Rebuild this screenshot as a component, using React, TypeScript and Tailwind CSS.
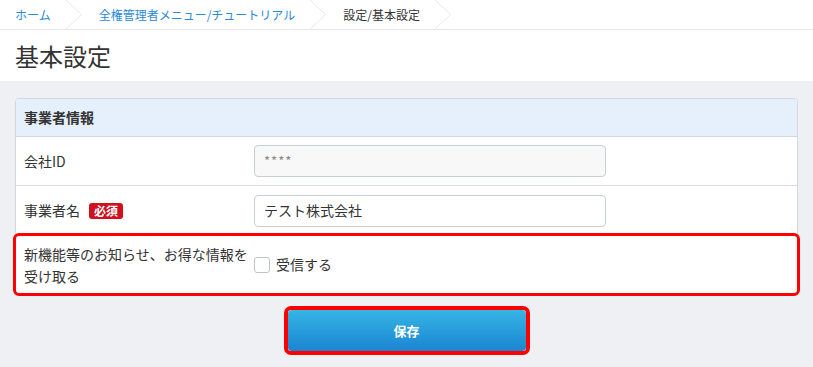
const crumbs = [
  { label: "ホーム", link: true },
  { label: "全権管理者メニュー/チュートリアル", link: true },
  { label: "設定/基本設定", link: false },
];

const Chevron = () => (
  <svg width="16" height="29" viewBox="0 0 16 29" className="shrink-0">
    <polyline points="0,0 15.5,14.5 0,29" fill="none" stroke="#e8e8e8" strokeWidth="1" />
  </svg>
);

const App = () => {
  return (
    <div
      className="w-[813px] h-[367px] overflow-hidden bg-[#eff0f4] text-[#333]"
      style={{ fontFamily: '"Noto Sans CJK JP", "Noto Sans", sans-serif' }}
    >
      <div className="bg-white">
        {/* breadcrumb */}
        <nav className="flex items-center h-[30px] border-b border-[#e8e8e8] pl-[15px] text-[12px]">
          {crumbs.map((c, i) => (
            <div key={i} className="flex items-center h-[29px]">
              <span className={c.link ? "text-[#2b8ad8]" : "text-[#333]"}>{c.label}</span>
              <span className="ml-[15px] mr-[17px] flex">
                <Chevron />
              </span>
            </div>
          ))}
        </nav>
        <div className="h-[51px] flex items-center pl-[15px]">
          <h1 className="text-[24px] font-normal leading-none text-[#333]">基本設定</h1>
        </div>
      </div>

      <div className="px-[15px] pt-[17px]">
        <div className="bg-white border border-[#d3d8de] rounded-[4px]">
          <div className="h-[38px] flex items-center px-[8px] bg-[#e5f0fc] border-b border-[#d3d8de] rounded-t-[4px]">
            <span className="text-[14px] font-bold">事業者情報</span>
          </div>

          <div className="flex items-center h-[49px] border-b border-[#d8dce0]">
            <div className="w-[238px] pl-[8px] text-[14px]">会社ID</div>
            <div className="w-[352px] h-[32px] rounded-[4px] border border-[#c9cfd4] bg-[#f8f8f8] flex items-center pl-[9px] text-[13px] text-[#888] tracking-[1px]">
              ****
            </div>
          </div>

          <div className="flex items-center h-[49px]">
            <div className="w-[238px] pl-[8px] text-[14px] flex items-center">
              事業者名
              <span className="ml-[9px] h-[16px] px-[5px] rounded-[3px] bg-[#d0101f] text-white text-[12px] leading-[16px] font-bold">
                必須
              </span>
            </div>
            <div className="w-[352px] h-[32px] rounded-[4px] border border-[#c9cfd4] bg-white flex items-center pl-[9px] text-[14px]">
              テスト株式会社
            </div>
          </div>

          <div className="relative flex items-center min-h-[59px]">
            <span className="pointer-events-none absolute -left-[3px] -right-[3px] -top-[2px] -bottom-[2px] border-[3px] border-[#ff0000] rounded-[6px]" />
            <div className="w-[238px] pl-[8px] text-[14px] leading-[22px]">
              新機能等のお知らせ、お得な情報を
              <br />
              受け取る
            </div>
            <label className="flex items-center text-[14px]">
              <span className="w-[16px] h-[16px] rounded-[3px] border border-[#bfc4c9] bg-white" />
              <span className="ml-[6px]">受信する</span>
            </label>
          </div>
        </div>

        <div className="flex justify-center mt-[11px]">
          <div className="border-[4px] border-[#ff0000] rounded-[7px]">
            <button className="w-[238px] h-[41px] rounded-[4px] bg-gradient-to-b from-[#36b5e4] to-[#1c84d2] text-white text-[13px] font-bold">
              保存
            </button>
          </div>
        </div>
      </div>
    </div>
  );
};

export default App;
